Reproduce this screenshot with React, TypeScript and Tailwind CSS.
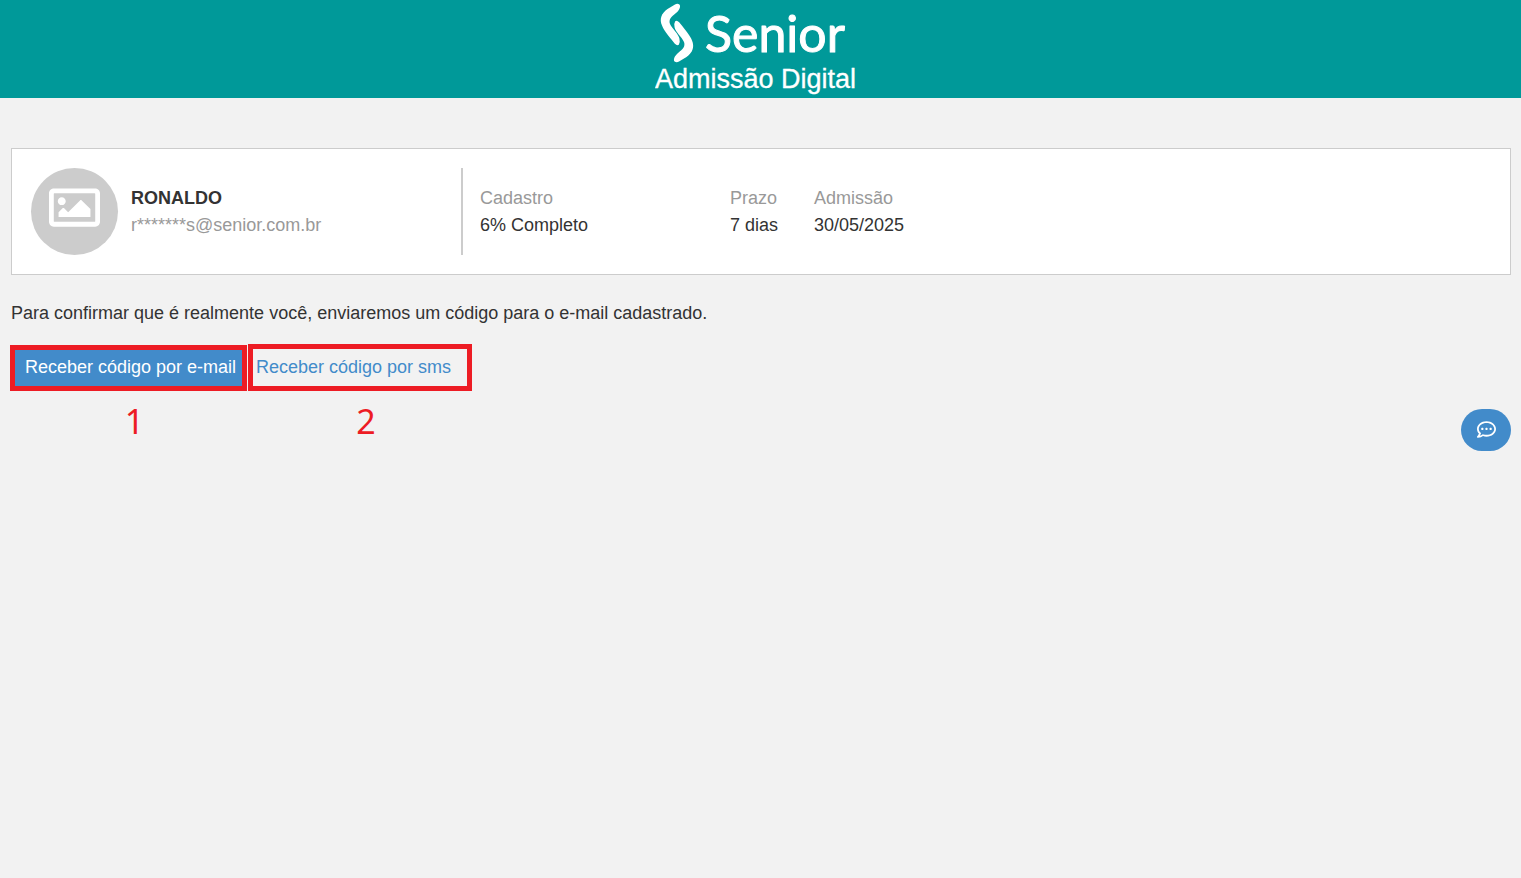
import type { ReactNode } from 'react'
import { FaRegCommentDots, FaRegImage } from 'react-icons/fa'

interface Info {
  label: string
  value: string
  width: string
}

const INFOS: Info[] = [
  { label: 'Cadastro', value: '6% Completo', width: 'w-[250px]' },
  { label: 'Prazo',    value: '7 dias',      width: 'w-[84px]' },
  { label: 'Admissão', value: '30/05/2025',  width: '' },
]

// One half of the mark, the other is the same shape turned around its centre
const MARK = 'M20 4.4 L12.5 9 C6 13.5 4.4 19.5 7 25.5 C8.5 29.5 12 34 19.6 43.4 Q22 46 23.8 44.8 Q25.4 42.5 24.4 38.4 C23.5 34 17 28.5 15 24 C13.5 19.5 16 17 21 13 C24.6 10 26 6 24.4 4.4 Q22.5 3 20 4.4 Z'

function Logo() {
  return (
    <svg width="208" height="98" viewBox="0 0 208 98" fill="#fff" role="img" aria-label="Senior Admissão Digital">
      <path d={MARK} />
      <path d={MARK} transform="rotate(180 22 33)" />
      <text
        x="50"
        y="52"
        fontSize="50"
        stroke="#fff"
        strokeWidth="1"
        strokeLinejoin="round"
        fontFamily="Lato, sans-serif"
      >
        Senior
      </text>
      <text x="0" y="88" fontSize="27" stroke="#fff" strokeWidth="0.3" fontFamily="'Liberation Sans', Arial, sans-serif">
        Admissão Digital
      </text>
    </svg>
  )
}

function Step({ number, children }: { number: number; children: ReactNode }) {
  return (
    <div className="flex flex-col items-center justify-end">
      {children}
      <span className="mt-[7px] pl-3 font-['Noto_Sans',sans-serif] text-[34px] leading-[46px] text-[#ed1c24]">{number}</span>
    </div>
  )
}

export default function App() {
  return (
    <div className="min-h-screen bg-[#f2f2f2] font-['Liberation_Sans',Arial,sans-serif] text-lg leading-[27px] text-[#333]">
      <header className="flex justify-center bg-[#009999] pr-1">
        <Logo />
      </header>

      <main className="pt-[50px] pr-[10px] pl-[11px]">
        <section className="flex items-center border border-[#ccc] bg-white p-[19px]">
          <div className="flex w-[430px] shrink-0 items-center gap-[13px]">
            <div className="flex size-[87px] items-center justify-center rounded-full bg-[#ccc] pb-2 text-white">
              <FaRegImage size={51} />
            </div>
            <div>
              <p className="font-bold">RONALDO</p>
              <p className="text-[#999]">r*******s@senior.com.br</p>
            </div>
          </div>

          <dl className="flex h-[87px] items-center border-l-2 border-[#ccc] pl-[17px]">
            {INFOS.map(({ label, value, width }) => (
              <div key={label} className={width}>
                <dt className="text-[#999]">{label}</dt>
                <dd>{value}</dd>
              </div>
            ))}
          </dl>
        </section>

        <p className="mt-[25px]">
          Para confirmar que é realmente você, enviaremos um código para o e-mail cadastrado.
        </p>

        <div className="mt-[17px] flex items-start">
          <div className="-ml-px flex gap-px">
            <Step number={1}>
              <button
                type="button"
                className="h-[46px] w-[237px] cursor-pointer border-5 border-[#ed1c24] bg-[#428bca] px-[10px] pb-px text-left whitespace-nowrap text-white"
              >
                Receber código por e-mail
              </button>
            </Step>
            <Step number={2}>
              <button
                type="button"
                className="h-[47px] w-[224px] cursor-pointer border-5 border-[#ed1c24] px-[3px] text-left whitespace-nowrap text-[#428bca]"
              >
                Receber código por sms
              </button>
            </Step>
          </div>
          <button
            type="button"
            aria-label="Chat"
            className="mt-[65px] ml-auto flex h-[42px] w-[50px] cursor-pointer items-center justify-center rounded-full bg-[#428bca] pb-[2px] text-white"
          >
            <FaRegCommentDots size={19} />
          </button>
        </div>
      </main>
    </div>
  )
}
